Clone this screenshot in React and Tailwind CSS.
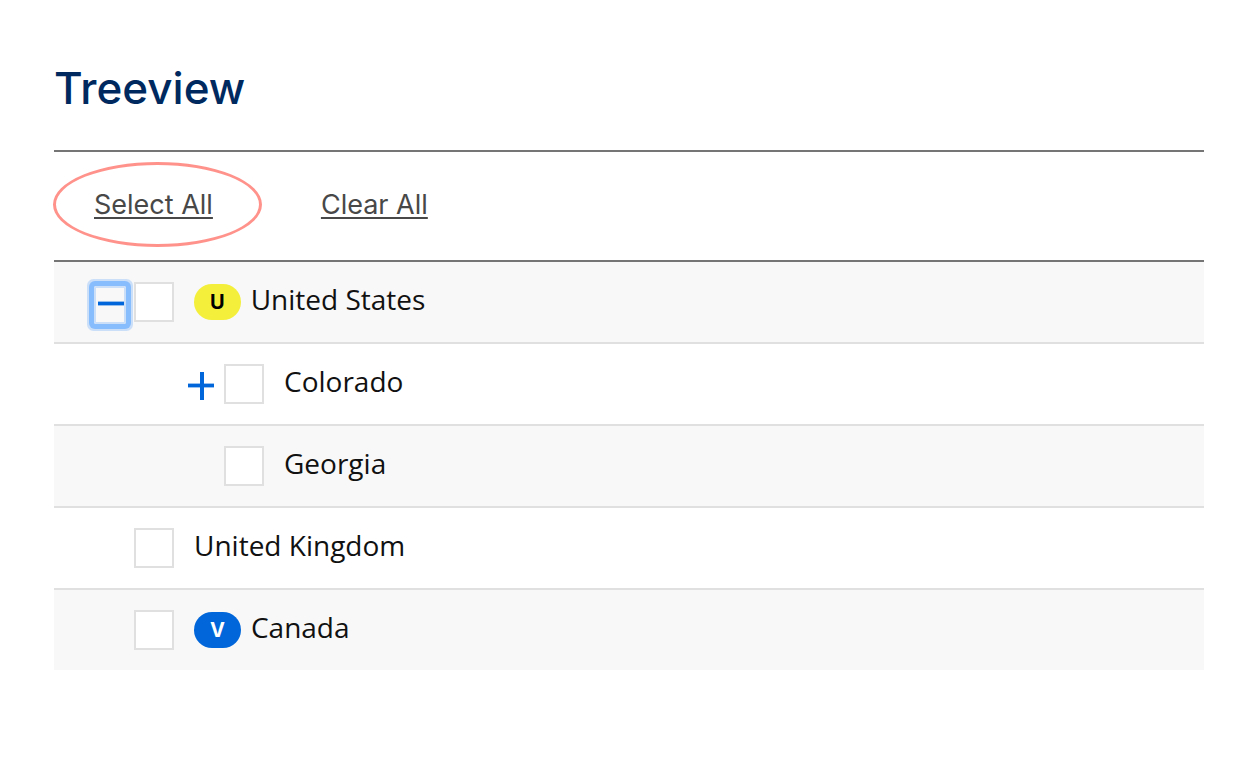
import { useState } from "react";

const rows = [
  { id: "us", label: "United States", level: 1, toggle: "minus", badge: "U", badgeClass: "bg-[#f3ef3a] text-black" },
  { id: "co", label: "Colorado", level: 2, toggle: "plus" },
  { id: "ga", label: "Georgia", level: 2 },
  { id: "uk", label: "United Kingdom", level: 1 },
  { id: "ca", label: "Canada", level: 1, badge: "V", badgeClass: "bg-[#0066d9] text-white" },
];

function Toggle({ kind, label }) {
  const open = kind === "minus";
  return (
    <button
      type="button"
      aria-expanded={open}
      aria-label={(open ? "Collapse " : "Expand ") + label}
      className={
        open
          ? "mt-1 block h-[38px] w-8 rounded-xs border-2 border-[#cbdff8] shadow-[0_0_0_5px_#88bdfd,0_0_0_7px_#cbdff8] outline-none"
          : "mt-1 block h-[38px] w-8 border-2 border-transparent"
      }
    >
      <svg viewBox="0 0 28 34" className="h-[34px] w-7" fill="#0066d9" aria-hidden="true">
        <rect x="2" y="13.6" width="26" height="3.8" />
        {!open && <rect x="14" y="2" width="4" height="28" />}
      </svg>
    </button>
  );
}

function Row({ row, checked, onChange }) {
  return (
    <li
      className={
        "flex items-start border-b-2 border-[#e0e0e0] py-5 odd:bg-[#f8f8f8] last:border-b-0 " +
        (row.level === 2 ? "pl-[130px]" : "pl-10")
      }
    >
      <div className="h-10 w-10 shrink-0">{row.toggle && <Toggle kind={row.toggle} label={row.label} />}</div>
      <input
        id={row.id}
        type="checkbox"
        checked={checked}
        onChange={onChange}
        className="h-10 w-10 shrink-0 appearance-none border-2 border-[#e0e0e0] bg-white checked:bg-[#0066d9]"
      />
      <label htmlFor={row.id} className="ml-5 flex items-start gap-2.5 text-[28px] leading-[34px] text-[#111111]">
        {row.badge && (
          <span
            className={
              "mt-0.5 rounded-full px-4 font-['Inter',sans-serif] text-[20px] leading-9 font-bold " + row.badgeClass
            }
          >
            {row.badge}
          </span>
        )}
        <span>{row.label}</span>
      </label>
    </li>
  );
}

export default function App() {
  const [selected, setSelected] = useState([]);
  const flip = (id) =>
    setSelected((s) => (s.includes(id) ? s.filter((x) => x !== id) : [...s, id]));

  return (
    <main className="min-h-screen bg-white px-[54px] pt-[63px] pb-16 font-['Open_Sans',sans-serif]">
      <h1 className="pb-[37px] font-['Inter',sans-serif] text-[44px] leading-[50px] font-medium text-[#002a5f]">
        Treeview
      </h1>
      <div className="flex items-center gap-[108px] border-y-2 border-[#757575] px-10 pt-[35px] pb-[37px] font-['Inter',sans-serif] text-[27px] leading-9 text-[#484848]">
        <div className="relative">
          <button
            type="button"
            onClick={() => setSelected(rows.map((r) => r.id))}
            className="block underline decoration-2 underline-offset-3"
          >
            Select All
          </button>
          <span className="pointer-events-none absolute -top-[25px] -left-[41px] h-[85px] w-[209px] rounded-[50%] border-[3px] border-[#ff938c]" />
        </div>
        <button
          type="button"
          onClick={() => setSelected([])}
          className="block underline decoration-2 underline-offset-3"
        >
          Clear All
        </button>
      </div>
      <ul>
        {rows.map((row) => (
          <Row key={row.id} row={row} checked={selected.includes(row.id)} onChange={() => flip(row.id)} />
        ))}
      </ul>
    </main>
  );
}
